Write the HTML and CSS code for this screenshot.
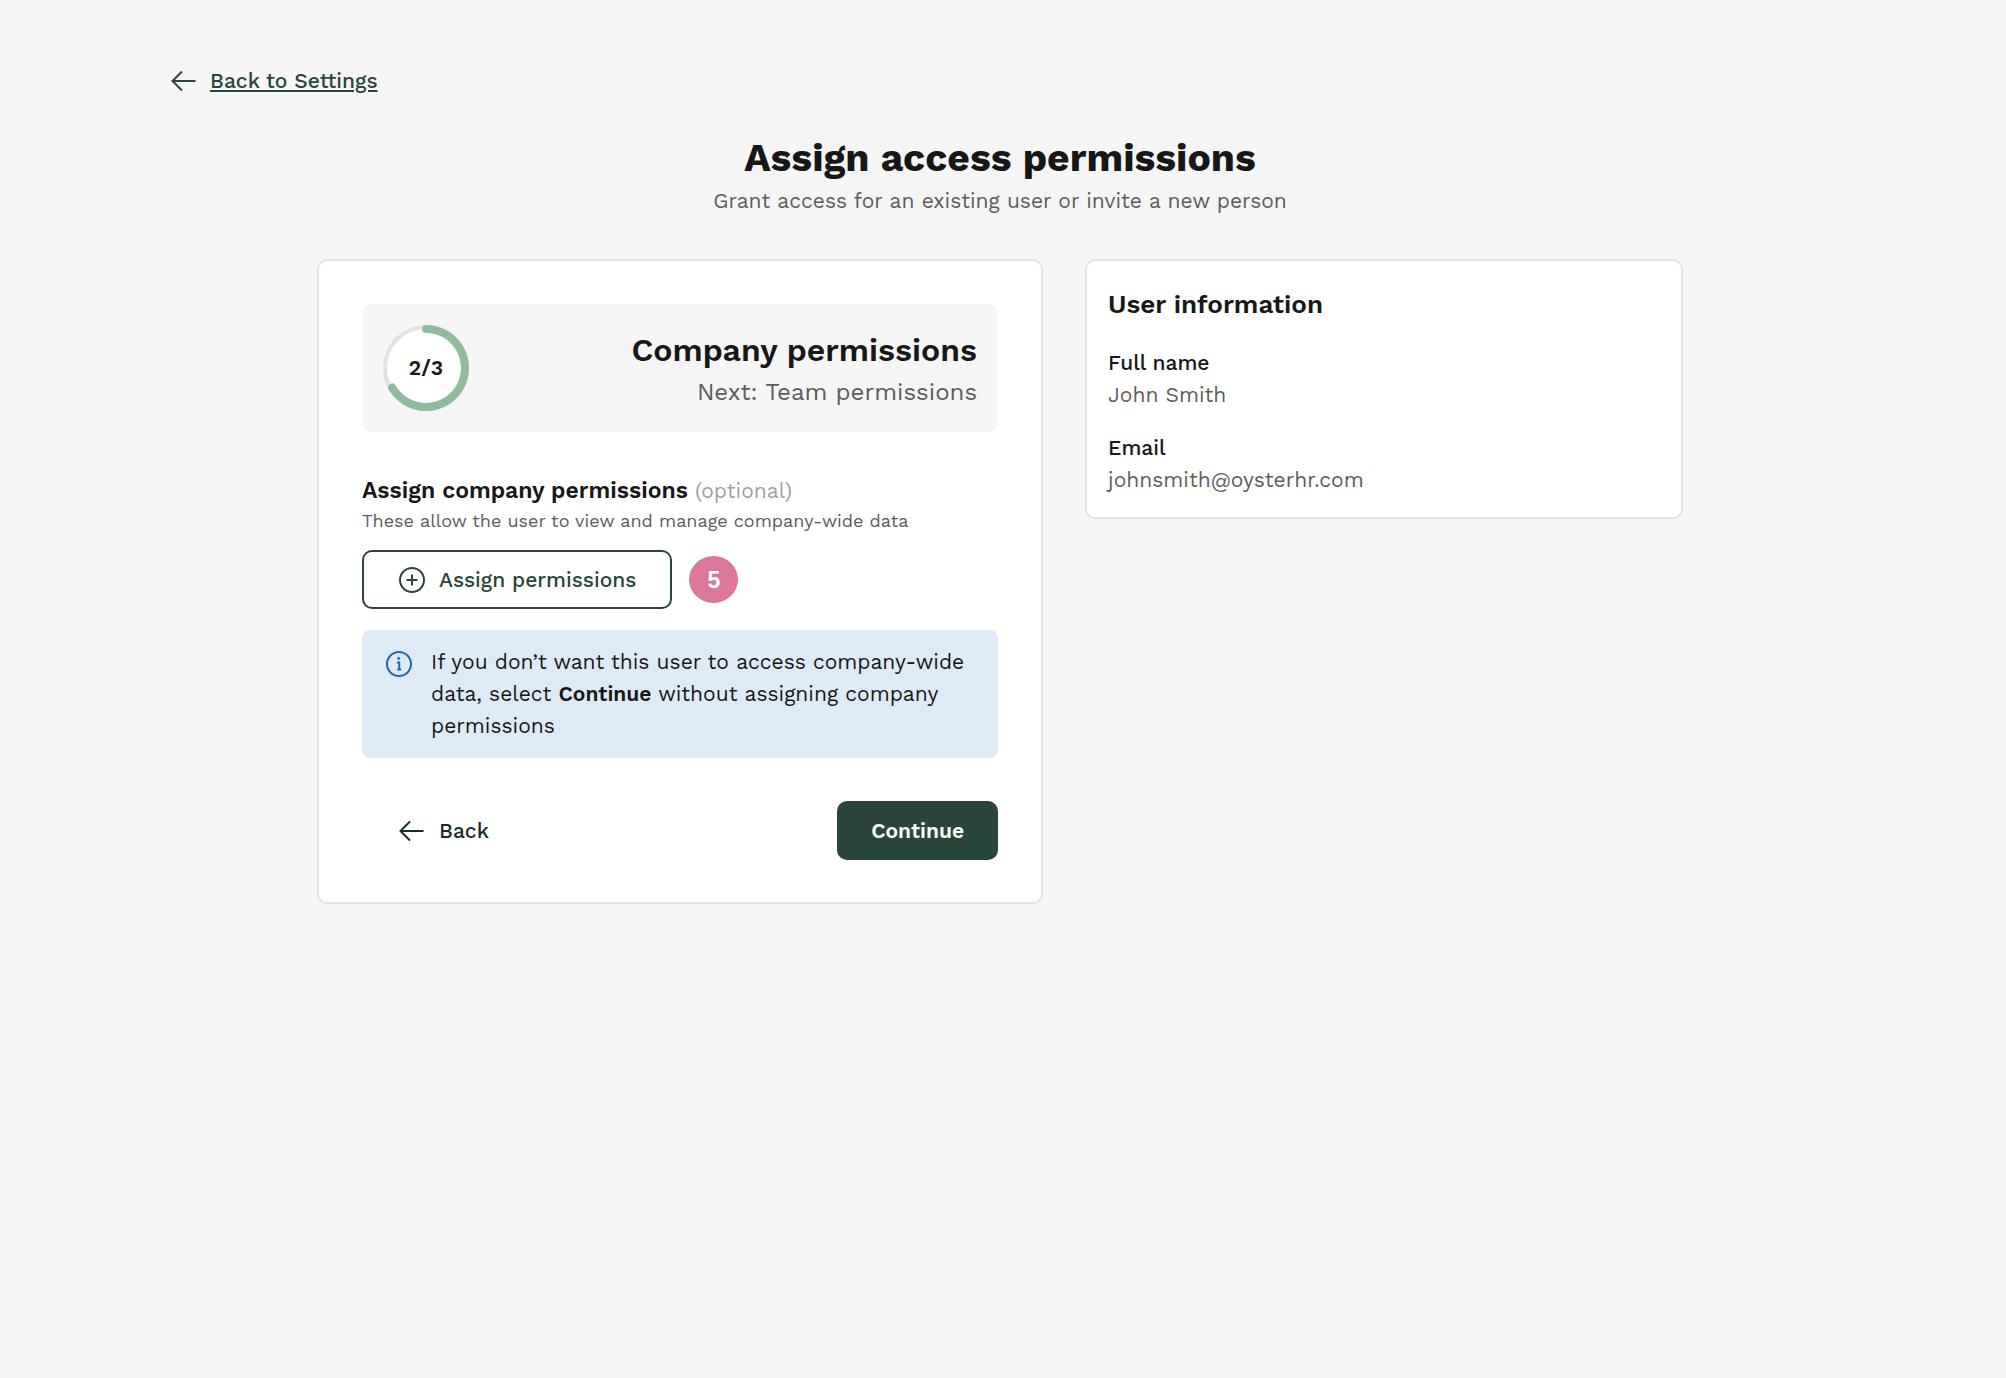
FILE: index.html
```html
<!DOCTYPE html>
<html lang="en">
<head>
    <meta charset="UTF-8">
    <meta name="viewport" content="width=device-width, initial-scale=1.0">
    <title>Assign access permissions</title>
    <link rel="stylesheet" href="styles.css">
</head>
<body>
    <main class="page">
        <a class="back-link" href="#settings">
            <svg class="icon" viewBox="0 0 32 32" aria-hidden="true"><path d="M27.5 16H4.5M14 6.5 4.5 16l9.5 9.5"/></svg>
            <span>Back to Settings</span>
        </a>

        <header class="page-header">
            <h1>Assign access permissions</h1>
            <p>Grant access for an existing user or invite a new person</p>
        </header>

        <div class="columns">
            <section class="card step-card">
                <div class="step">
                    <div class="progress">
                        <svg viewBox="0 0 86 86" aria-hidden="true">
                            <circle class="track" cx="43" cy="43" r="41"/>
                            <path class="bar" d="M43 4A39 39 0 1 1 9.2 62.5"/>
                        </svg>
                        <span>2/3</span>
                    </div>
                    <div class="step-text">
                        <h2>Company permissions</h2>
                        <p>Next: Team permissions</p>
                    </div>
                </div>

                <div class="field">
                    <h3>Assign company permissions <span class="optional">(optional)</span></h3>
                    <p>These allow the user to view and manage company-wide data</p>
                    <div class="field-action">
                        <button type="button" class="btn btn-outline">
                            <svg class="icon" viewBox="0 0 32 32" aria-hidden="true"><circle cx="16" cy="16" r="12"/><path d="M16 10.5v11M10.5 16h11"/></svg>
                            Assign permissions
                        </button>
                        <span class="marker">5</span>
                    </div>
                </div>

                <div class="notice">
                    <svg class="icon" viewBox="0 0 32 32" aria-hidden="true"><circle cx="16" cy="16" r="12"/><path class="thin" d="M13.8 14.5h2.4v7M14.2 21.5h4"/><circle class="dot" cx="15.7" cy="10.5" r="1.4"/></svg>
                    <p>If you don’t want this user to access company-wide data, select <strong>Continue</strong> without assigning company permissions</p>
                </div>

                <div class="actions">
                    <button type="button" class="btn btn-text">
                        <svg class="icon" viewBox="0 0 32 32" aria-hidden="true"><path d="M27.5 16H4.5M14 6.5 4.5 16l9.5 9.5"/></svg>
                        Back
                    </button>
                    <button type="submit" class="btn btn-primary">Continue</button>
                </div>
            </section>

            <aside class="card user-card">
                <h2>User information</h2>
                <dl>
                    <div>
                        <dt>Full name</dt>
                        <dd>John Smith</dd>
                    </div>
                    <div>
                        <dt>Email</dt>
                        <dd>johnsmith@oysterhr.com</dd>
                    </div>
                </dl>
            </aside>
        </div>
    </main>
</body>
</html>
```

FILE: styles.css
```css
* {
    box-sizing: border-box;
}
body {
    margin: 0;
    padding: 0 6px 0 0;
    background-color: #f5f5f5;
    color: #171717;
    font-family: "Work Sans", Inter, sans-serif;
    font-size: 21px;
    line-height: 32px;
}
h1, h2, h3, p, dl, dd {
    margin: 0;
}
.page {
    max-width: 1664px;
    margin: 0 auto;
    padding: 65px 0 43px;
}
.icon {
    width: 32px;
    height: 32px;
    flex-shrink: 0;
    fill: none;
    stroke: currentColor;
    stroke-width: 2;
}
.back-link {
    display: inline-flex;
    gap: 10px;
    color: #2a4539;
    font-weight: 500;
    text-decoration: none;
}
.back-link span {
    text-decoration: underline;
    text-decoration-thickness: 2px;
    text-underline-offset: 2px;
}
.page-header {
    margin-top: 24px;
    text-align: center;
}
.page-header h1 {
    font-size: 39px;
    font-weight: 700;
    line-height: 55px;
}
.page-header p,
.step-text p,
.field p,
.user-card dd {
    color: #5c5c5c;
}
.columns {
    display: grid;
    grid-template-columns: 17fr 14fr;
    align-items: start;
    gap: 42px;
    max-width: 1366px;
    margin: 42px auto 0;
}
.card {
    background-color: #fff;
    border: 2px solid #e2e2e2;
    border-radius: 10px;
}
.step-card {
    padding: 43px 43px 42px;
}
.step {
    display: flex;
    justify-content: space-between;
    align-items: center;
    padding: 21px;
    background-color: #f5f5f5;
    border-radius: 10px;
}
.progress {
    display: grid;
    place-items: center;
    width: 86px;
    height: 86px;
}
.progress svg,
.progress span {
    grid-area: 1 / 1;
}
.progress span {
    font-weight: 600;
}
.progress svg {
    width: 100%;
}
.track {
    fill: #fff;
    stroke: #e2e2e2;
    stroke-width: 4;
}
.bar {
    fill: none;
    stroke: #8fbc9f;
    stroke-width: 8;
    stroke-linecap: round;
}
.step-text {
    padding-top: 4px;
    text-align: right;
}
.step-text h2 {
    font-size: 32px;
    font-weight: 600;
    line-height: 43px;
}
.step-text p {
    margin-top: 2px;
    font-size: 24px;
    line-height: 37px;
}
.field {
    margin-top: 43px;
}
.field h3 {
    font-size: 23px;
    font-weight: 600;
}
.field .optional {
    color: #a0a0a0;
    font-size: 21px;
    font-weight: 400;
}
.field p {
    font-size: 18px;
    line-height: 27px;
}
.field-action {
    display: flex;
    align-items: center;
    gap: 17px;
    margin-top: 16px;
}
.btn {
    display: inline-flex;
    align-items: center;
    gap: 11px;
    height: 59px;
    padding: 0 32px;
    border: 2px solid transparent;
    border-radius: 10px;
    background: none;
    color: #2a4539;
    font: inherit;
    font-weight: 500;
    cursor: pointer;
}
.btn-outline {
    padding-right: 34px;
    border-color: #2a4539;
}
.btn-text {
    color: #1b2c25;
}
.btn-primary {
    background-color: #2a4539;
    color: #fff;
    font-weight: 600;
}
.marker {
    display: grid;
    place-items: center;
    width: 49px;
    height: 47px;
    border-radius: 50%;
    background-color: #db779b;
    color: #fff;
    font-family: "Liberation Sans", sans-serif;
    font-size: 23px;
    font-weight: 700;
}
.notice {
    display: flex;
    gap: 16px;
    margin-top: 21px;
    padding: 16px 21px;
    border-radius: 8px;
    background-color: #deebf6;
}
.notice .icon {
    margin-top: 2px;
    color: #2467ae;
}
.notice .dot {
    fill: currentColor;
    stroke: none;
}
.notice strong {
    font-weight: 600;
}
.actions {
    display: flex;
    justify-content: space-between;
    margin-top: 43px;
}
.user-card {
    padding: 21px;
}
.user-card h2 {
    font-size: 26px;
    font-weight: 600;
    line-height: 44px;
}
.user-card dl {
    display: grid;
    gap: 21px;
    margin-top: 21px;
}
.user-card dt {
    font-weight: 500;
}
```
